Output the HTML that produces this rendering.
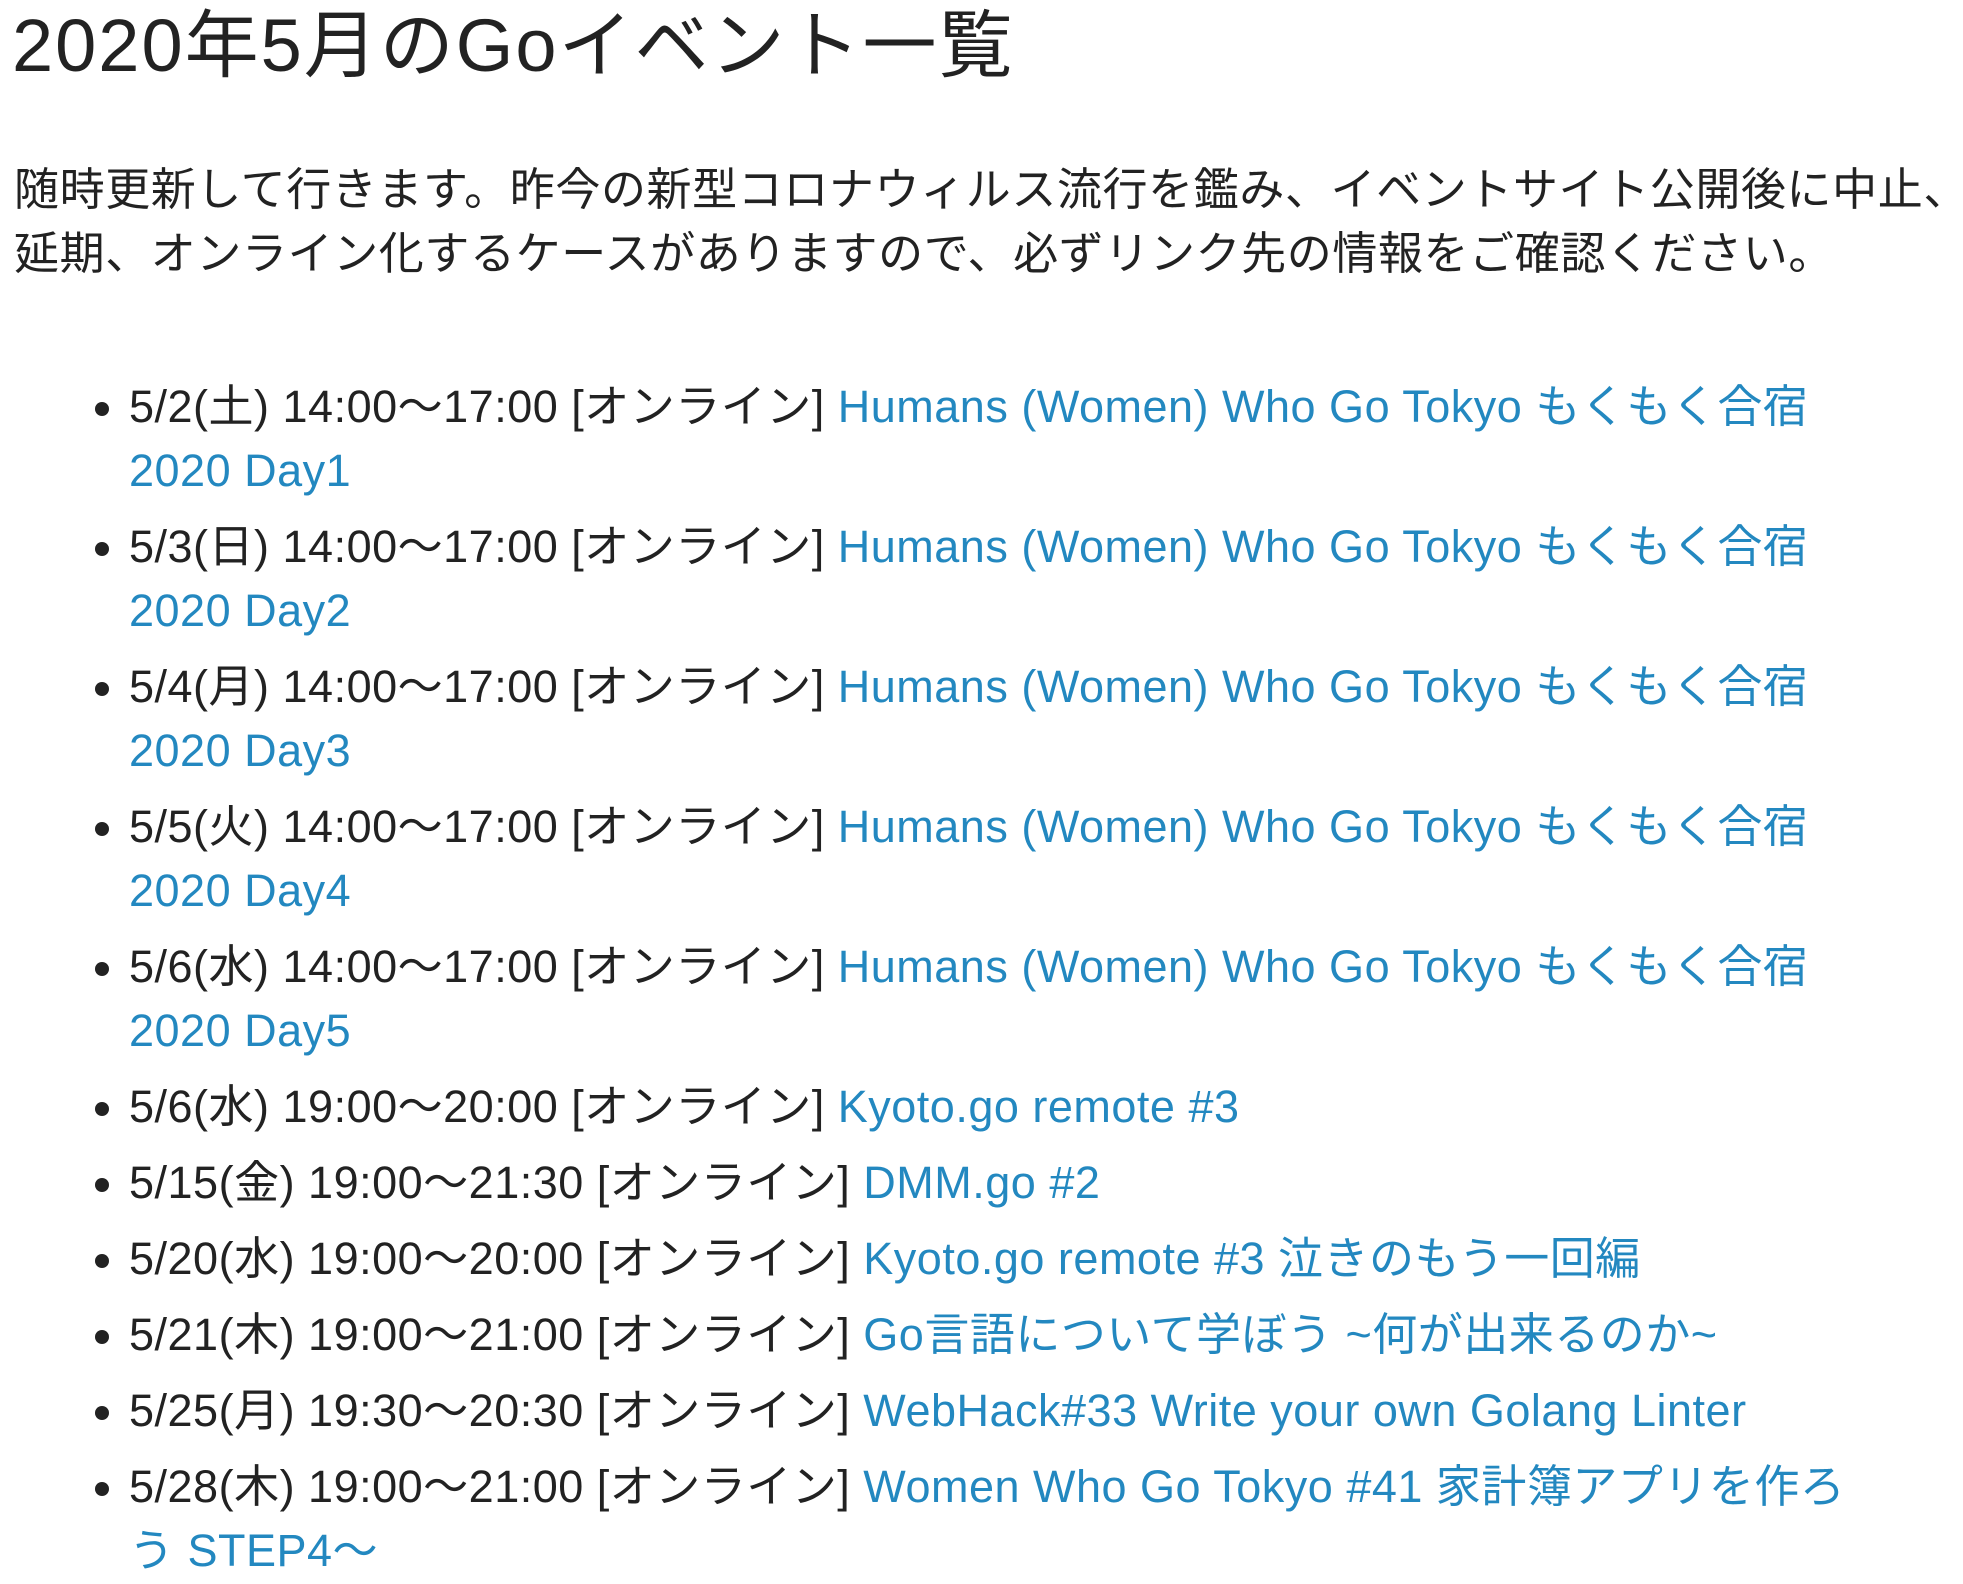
<!DOCTYPE html>
<html><head><meta charset="utf-8"><style>
body{margin:0;width:1963px;height:1584px;background:#fff;color:#222;font-family:"Liberation Sans","Noto Sans CJK JP",sans-serif;overflow:hidden}
h1{font-weight:normal;font-size:74px;line-height:92px;margin:0 0 0 12px;letter-spacing:2px}
p{font-size:45px;line-height:64px;margin:66px 0 0 14px;width:1949px;letter-spacing:0.6px;white-space:nowrap}
ul{margin:89px 0 0 0;padding:0 0 0 129px;width:1740px;font-size:45px;line-height:64px;letter-spacing:0.5px}
li{margin-bottom:12px}
a{color:#2388c0;text-decoration:none}
</style></head><body>
<h1>2020年5月のGoイベント一覧</h1>
<p>随時更新して行きます。昨今の新型コロナウィルス流行を鑑み、イベントサイト公開後に中止、<br>延期、オンライン化するケースがありますので、必ずリンク先の情報をご確認ください。</p>
<ul>
<li>5/2(土) 14:00〜17:00 [オンライン] <a>Humans (Women) Who Go Tokyo もくもく合宿 2020 Day1</a></li>
<li>5/3(日) 14:00〜17:00 [オンライン] <a>Humans (Women) Who Go Tokyo もくもく合宿 2020 Day2</a></li>
<li>5/4(月) 14:00〜17:00 [オンライン] <a>Humans (Women) Who Go Tokyo もくもく合宿 2020 Day3</a></li>
<li>5/5(火) 14:00〜17:00 [オンライン] <a>Humans (Women) Who Go Tokyo もくもく合宿 2020 Day4</a></li>
<li>5/6(水) 14:00〜17:00 [オンライン] <a>Humans (Women) Who Go Tokyo もくもく合宿 2020 Day5</a></li>
<li>5/6(水) 19:00〜20:00 [オンライン] <a>Kyoto.go remote #3</a></li>
<li>5/15(金) 19:00〜21:30 [オンライン] <a>DMM.go #2</a></li>
<li>5/20(水) 19:00〜20:00 [オンライン] <a>Kyoto.go remote #3 泣きのもう一回編</a></li>
<li>5/21(木) 19:00〜21:00 [オンライン] <a>Go言語について学ぼう ~何が出来るのか~</a></li>
<li>5/25(月) 19:30〜20:30 [オンライン] <a>WebHack#33 Write your own Golang Linter</a></li>
<li>5/28(木) 19:00〜21:00 [オンライン] <a>Women Who Go Tokyo #41 家計簿アプリを作ろ<br>う STEP4〜</a></li>
</ul>
</body></html>
